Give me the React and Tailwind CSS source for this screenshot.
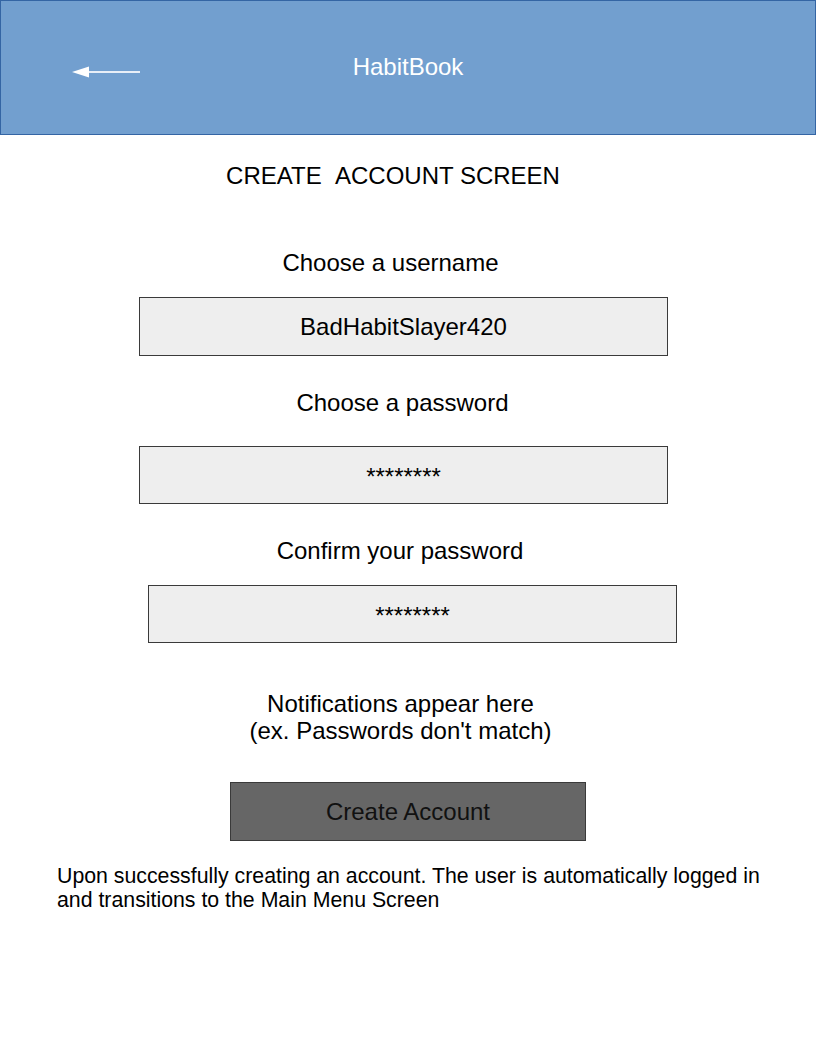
import React from "react";

export default function App() {
  return (
    <div className="w-[816px] h-[1056px] bg-white text-black font-['Liberation_Sans',Arial,sans-serif] overflow-hidden">
      <header className="relative h-[135px] bg-[#729fcf] border border-[#3465a4] flex items-center justify-center">
        <svg className="absolute left-[69px] top-[64px]" width="72" height="14" viewBox="0 0 72 14">
          <line x1="16" y1="7" x2="70" y2="7" stroke="#e8eef7" strokeWidth="2" />
          <polygon points="2,7 19,1.5 19,12.5" fill="#ffffff" />
        </svg>
        <span className="text-white text-[24px] leading-[28px] -mt-[2px]">HabitBook</span>
      </header>

      <div className="flex flex-col">
        <div className="mt-[27px] text-center text-[24px] leading-[28px] pr-[30px]">CREATE&nbsp;&nbsp;ACCOUNT SCREEN</div>

        <div className="mt-[59px] text-center text-[24px] leading-[28px] pr-[35px]">Choose a username</div>
        <div className="mt-[20px] ml-[139px] w-[529px] h-[59px] bg-[#eeeeee] border border-[#3a3a3a] flex items-center justify-center text-[24px]">
          BadHabitSlayer420
        </div>

        <div className="mt-[33px] text-center text-[24px] leading-[28px] pr-[11px]">Choose a password</div>
        <div className="mt-[29px] ml-[139px] w-[529px] h-[58px] bg-[#eeeeee] border border-[#3a3a3a] flex items-center justify-center text-[24px] pt-[4px]">
          ********
        </div>

        <div className="mt-[33px] text-center text-[24px] leading-[28px] pr-[16px]">Confirm your password</div>
        <div className="mt-[20px] ml-[148px] w-[529px] h-[58px] bg-[#eeeeee] border border-[#3a3a3a] flex items-center justify-center text-[24px] pt-[4px]">
          ********
        </div>

        <div className="mt-[47px] text-center text-[24px] leading-[27px] pr-[15px]">
          Notifications appear here
          <br />
          (ex. Passwords don't match)
        </div>

        <div className="mt-[38px] ml-[230px] w-[356px] h-[59px] bg-[#666666] border border-[#3a3a3a] flex items-center justify-center text-[24px] text-[#111111] pt-[1px]">
          Create Account
        </div>

        <div className="mt-[23px] ml-[57px] w-[730px] text-[21.3px] leading-[24px]">
          Upon successfully creating an account. The user is automatically logged in and transitions to the Main Menu Screen
        </div>
      </div>
    </div>
  );
}
